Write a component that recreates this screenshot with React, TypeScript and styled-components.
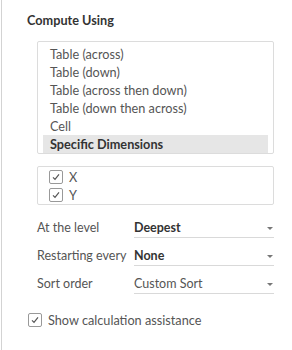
import React from "react";
import styled, { createGlobalStyle } from "styled-components";

const GlobalStyle = createGlobalStyle`
  html, body {
    margin: 0;
    padding: 0;
    background: #ffffff;
  }
  body {
    font-family: Lato, "Open Sans", "Liberation Sans", sans-serif;
  }
`;

const Frame = styled.div`
  margin-left: 1px;
  border-left: 1px solid #d3d3d3;
  height: 350px;
  box-sizing: border-box;
  padding: 12px 18px 0 25px;
  color: #555;
`;

const Title = styled.div`
  font-size: 12.7px;
  font-weight: 700;
  line-height: 16px;
  color: #333;
  margin-bottom: 13px;
`;

const ListBox = styled.div`
  margin-left: 10px;
  border: 1px solid #dcdcdc;
  border-radius: 2px;
  padding: 3px 5px 0 5px;
`;

const ListItem = styled.div<{ $selected?: boolean }>`
  height: 18px;
  line-height: 18px;
  font-size: 12.7px;
  padding-left: 7px;
  color: ${(p) => (p.$selected ? "#333" : "#555")};
  font-weight: ${(p) => (p.$selected ? 700 : 400)};
  background: ${(p) => (p.$selected ? "#e6e6e6" : "transparent")};
`;

const CheckBoxList = styled.div`
  margin: 12px 0 0 10px;
  border: 1px solid #dcdcdc;
  border-radius: 2px;
  padding: 1px 0 0 11px;
`;

const CheckRow = styled.label<{ $indent?: number }>`
  display: flex;
  align-items: center;
  gap: 6px;
  height: 18px;
  font-size: 12.7px;
  color: #555;
  margin-left: ${(p) => p.$indent ?? 0}px;
`;

const Box = styled.span`
  width: 12px;
  height: 12px;
  border: 1px solid #999;
  border-radius: 2px;
  display: flex;
  align-items: center;
  justify-content: center;
  background: #fff;
`;

const Form = styled.div`
  margin: 5px 0 0 10px;
`;

const FieldRow = styled.div`
  display: grid;
  grid-template-columns: 97px 1fr;
  height: 28px;
  font-size: 12.5px;
`;

const Label = styled.div`
  padding-top: 9px;
  line-height: 18px;
  color: #555;
  white-space: nowrap;
`;

const Select = styled.div<{ $bold?: boolean }>`
  padding-top: 9px;
  line-height: 18px;
  border-bottom: 1px solid #d9d9d9;
  display: flex;
  justify-content: space-between;
  align-items: center;
  color: ${(p) => (p.$bold ? "#333" : "#555")};
  font-weight: ${(p) => (p.$bold ? 700 : 400)};
`;

const Arrow = styled.span`
  width: 0;
  height: 0;
  border-left: 3px solid transparent;
  border-right: 3px solid transparent;
  border-top: 3px solid #777;
  margin-right: 1px;
`;

const Footer = styled.div`
  margin-top: 17px;
`;

const Check = () => (
  <Box>
    <svg width="10" height="10" viewBox="0 0 10 10">
      <path d="M2 5.3 L4 7.3 L8 2.3" fill="none" stroke="#555" strokeWidth="1.2" />
    </svg>
  </Box>
);

const options = [
  "Table (across)",
  "Table (down)",
  "Table (across then down)",
  "Table (down then across)",
  "Cell",
  "Specific Dimensions",
];

const fields = [
  { label: "At the level", value: "Deepest", bold: true },
  { label: "Restarting every", value: "None", bold: true },
  { label: "Sort order", value: "Custom Sort", bold: false },
];

export default function App() {
  return (
    <>
      <GlobalStyle />
      <Frame>
        <Title>Compute Using</Title>
        <ListBox>
          {options.map((o) => (
            <ListItem key={o} $selected={o === "Specific Dimensions"}>
              {o}
            </ListItem>
          ))}
        </ListBox>
        <CheckBoxList>
          <CheckRow>
            <Check />X
          </CheckRow>
          <CheckRow>
            <Check />Y
          </CheckRow>
        </CheckBoxList>
        <Form>
          {fields.map((f) => (
            <FieldRow key={f.label}>
              <Label>{f.label}</Label>
              <Select $bold={f.bold}>
                {f.value}
                <Arrow />
              </Select>
            </FieldRow>
          ))}
        </Form>
        <Footer>
          <CheckRow $indent={1}>
            <Check />Show calculation assistance
          </CheckRow>
        </Footer>
      </Frame>
    </>
  );
}
